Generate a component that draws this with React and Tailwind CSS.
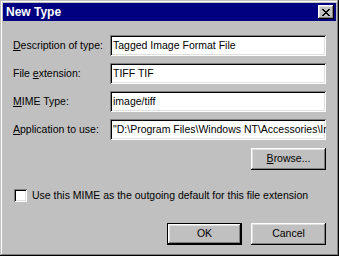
import React from 'react'

const raised = "shadow-[inset_-1px_-1px_0_#000,inset_1px_1px_0_#fff,inset_-2px_-2px_0_#808080,inset_2px_2px_0_#dfdfdf]"
const sunken = "shadow-[inset_1px_1px_0_#808080,inset_-1px_-1px_0_#fff,inset_2px_2px_0_#000,inset_-2px_-2px_0_#dfdfdf]"

const Field = ({ label, value }) => (
  <div className="flex items-center h-[21px]">
    <div className="w-[97px] whitespace-nowrap">{label}</div>
    <div className={"w-[216px] h-[21px] bg-white flex items-center px-[3px] overflow-hidden whitespace-nowrap " + sunken}>
      {value}
    </div>
  </div>
)

const CloseGlyph = () => (
  <svg width="8" height="7" viewBox="0 0 8 7" shapeRendering="crispEdges">
    <path d="M0 0h2v1H0zM6 0h2v1H6zM1 1h2v1H1zM5 1h2v1H5zM2 2h4v1H2zM3 3h2v1H3zM2 4h4v1H2zM1 5h2v1H1zM5 5h2v1H5zM0 6h2v1H0zM6 6h2v1H6z" fill="#000" />
  </svg>
)

export default function App() {
  return (
    <div className="w-[339px] h-[256px] bg-[#c0c0c0] p-[3px] flex flex-col font-['Liberation_Sans',Arial,sans-serif] text-[10.5px] text-black shadow-[inset_-1px_-1px_0_#000,inset_1px_1px_0_#c0c0c0,inset_-2px_-2px_0_#808080,inset_2px_2px_0_#fff]">
      <div className="h-[18px] bg-[#000080] flex items-center justify-between pl-[3px] pr-[2px]">
        <span className="text-white font-bold text-[12px]">New Type</span>
        <div className={"w-[16px] h-[14px] bg-[#c0c0c0] flex items-center justify-center " + raised}>
          <CloseGlyph />
        </div>
      </div>

      <div className="flex flex-col px-[10px] pt-[14px]">
        <div className="flex flex-col gap-[7px]">
          <Field label={<><u>D</u>escription of type:</>} value="Tagged Image Format File" />
          <Field label={<>File <u>e</u>xtension:</>} value="TIFF TIF" />
          <Field label={<><u>M</u>IME Type:</>} value="image/tiff" />
          <Field label={<><u>A</u>pplication to use:</>} value={'"D:\\Program Files\\Windows NT\\Accessories\\ImageVue\\kodakimg.exe" "%1"'} />
        </div>

        <div className="flex justify-end mt-[8px]">
          <button className={"w-[75px] h-[22px] bg-[#c0c0c0] " + raised}>
            <u>B</u>rowse...
          </button>
        </div>

        <div className="flex items-center mt-[18px] ml-[1px] gap-[5px]">
          <div className={"w-[13px] h-[13px] bg-white " + sunken}></div>
          <span>Use this MIME as the outgoing default for this file extension</span>
        </div>

        <div className="flex justify-end gap-[9px] mt-[19px]">
          <button className="w-[75px] h-[22px] border border-black bg-[#c0c0c0]">
            <div className={"w-full h-full flex items-center justify-center " + raised}>OK</div>
          </button>
          <button className={"w-[75px] h-[22px] bg-[#c0c0c0] " + raised}>Cancel</button>
        </div>
      </div>
    </div>
  )
}
